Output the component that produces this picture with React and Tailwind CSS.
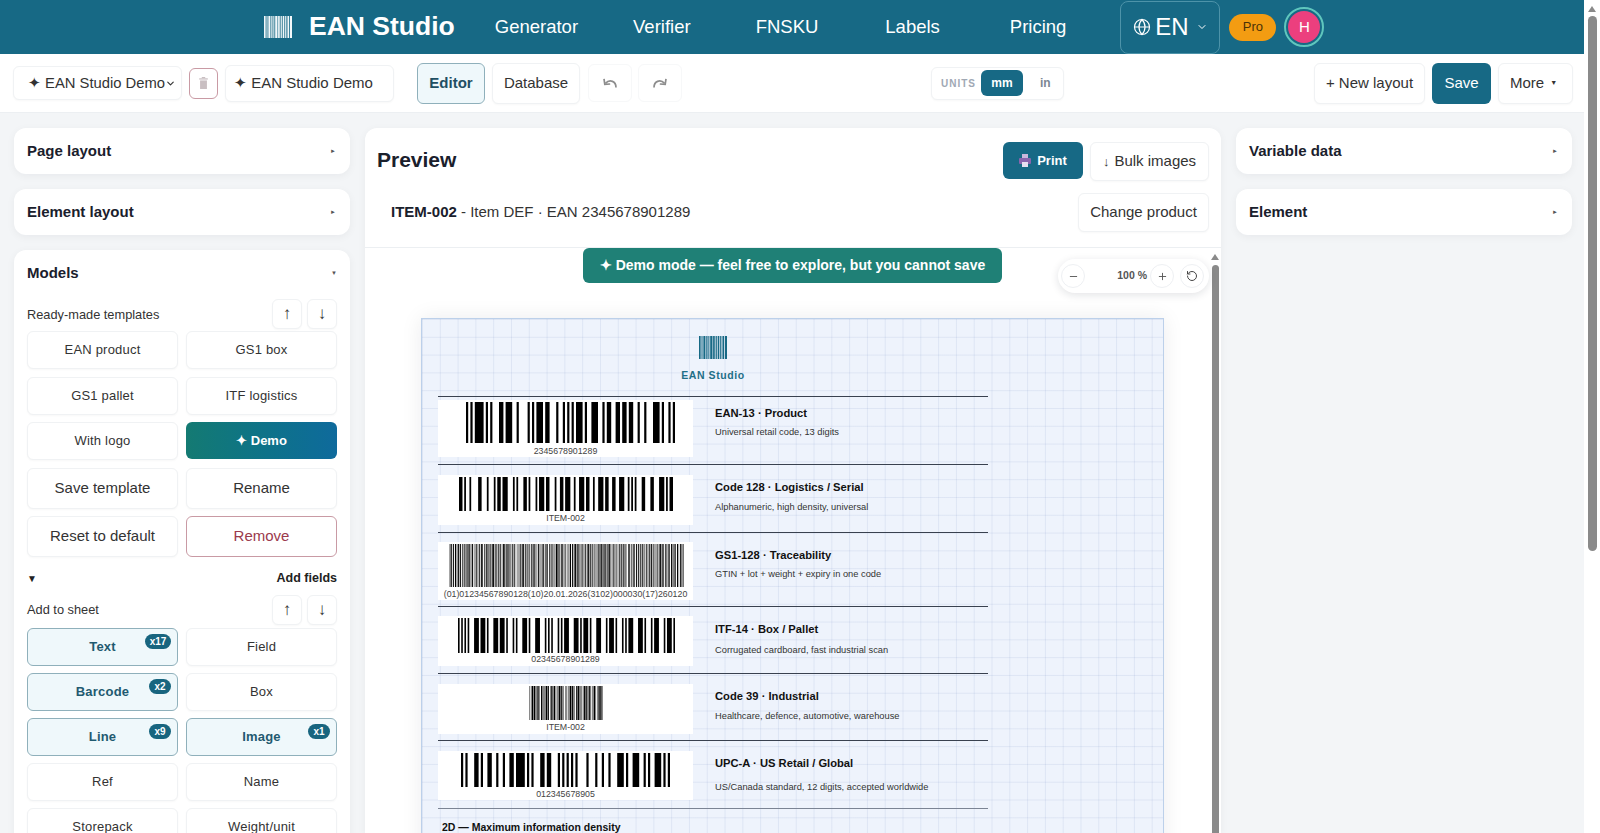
import { ChevronDown, Globe, Minus, Plus, RotateCcw } from "lucide-react";

const EAN_L = ["0001101", "0011001", "0010011", "0111101", "0100011", "0110001", "0101111", "0111011", "0110111", "0001011"];
const EAN_PARITY = ["LLLLLL", "LLGLGG", "LLGGLG", "LLGGGL", "LGLLGG", "LGGLLG", "LGGGLL", "LGLGLG", "LGLGGL", "LGGLGL"];
const flip = (s) => s.split("").map((c) => (c === "0" ? "1" : "0")).join("");
const eanR = (d) => flip(EAN_L[d]);
const eanG = (d) => eanR(d).split("").reverse().join("");

function ean13(code) {
  const digits = code.split("").map(Number);
  const parity = EAN_PARITY[digits[0]];
  let bits = "101";
  digits.slice(1, 7).forEach((d, i) => {
    bits += parity[i] === "L" ? EAN_L[d] : eanG(d);
  });
  bits += "01010";
  digits.slice(7).forEach((d) => {
    bits += eanR(d);
  });
  return bits + "101";
}

function widthsToBits(widths) {
  let bits = "";
  widths.split("").forEach((w, i) => {
    bits += (i % 2 === 0 ? "1" : "0").repeat(Number(w));
  });
  return bits;
}

function code128() {
  // start B, ITEM-002, check, stop
  return widthsToBits("211214" + "231311" + "213311" + "132113" + "113123" + "122132" + "123122" + "123122" + "223211" + "111323" + "2331112");
}

function itf14(code) {
  const nw = ["nnwwn", "wnnnw", "nwnnw", "wwnnn", "nnwnw", "wnwnn", "nwwnn", "nnnww", "wnnwn", "nwnwn"];
  let widths = "1111";
  for (let i = 0; i < code.length; i += 2) {
    const a = nw[Number(code[i])];
    const b = nw[Number(code[i + 1])];
    for (let j = 0; j < 5; j++) {
      widths += a[j] === "w" ? "3" : "1";
      widths += b[j] === "w" ? "3" : "1";
    }
  }
  return widthsToBits(widths + "311");
}

function code39(text) {
  const table = { "0": "000110100", "2": "001100001", I: "001001100", T: "000010110", E: "100011000", M: "101000010", "-": "010000101", "*": "010010100" };
  let widths = "";
  text.split("").forEach((c) => {
    widths += table[c].split("").map((b) => (b === "1" ? "3" : "1")).join("") + "1";
  });
  return widthsToBits(widths);
}

function denseBits() {
  let seed = 17;
  let widths = "";
  for (let i = 0; i < 330; i++) {
    seed = (seed * 137 + 29) % 1009;
    widths += String((seed % 3) + 1);
  }
  return widthsToBits("1" + widths);
}

function Bars({ bits, className }) {
  const rects = [];
  let start = -1;
  for (let i = 0; i <= bits.length; i++) {
    if (bits[i] === "1" && start < 0) start = i;
    if (bits[i] !== "1" && start >= 0) {
      rects.push(<rect key={i} x={start} y="0" width={i - start} height="10" />);
      start = -1;
    }
  }
  return (
    <svg viewBox={`0 0 ${bits.length} 10`} preserveAspectRatio="none" className={className} fill="#000">
      {rects}
    </svg>
  );
}

function LogoBars({ className }) {
  const xs = [0, 2.4, 4.2, 7, 9, 10.8, 13.6, 16, 18, 20.4, 22.6, 25];
  const ws = [1.6, 1, 2, 1.2, 1, 2.2, 1.6, 1.2, 1.6, 1.2, 1.6, 2];
  return (
    <svg viewBox="0 0 27 22" preserveAspectRatio="none" className={className} fill="currentColor">
      {xs.map((x, i) => (
        <rect key={x} x={x} y="0" width={ws[i]} height="22" />
      ))}
    </svg>
  );
}

function CurvedArrow({ className }) {
  return (
    <svg viewBox="0 0 16 12" className={className} fill="none" stroke="currentColor" strokeWidth="1.7">
      <path d="M14 10.5C14 4.5 8 1.5 3.4 6.4" />
      <path d="M2 1.8L2.8 7.4L8.2 7" />
    </svg>
  );
}

const navItems = [
  { label: "Generator", className: "ml-[40px]" },
  { label: "Verifier", className: "ml-[55px]" },
  { label: "FNSKU", className: "ml-[65px]" },
  { label: "Labels", className: "ml-[67px]" },
  { label: "Pricing", className: "ml-[70px]" },
];

const rows = [
  {
    height: "h-[68px]",
    box: "mt-[3px] h-[57px]",
    barsWrap: "ml-[28px] mt-[2px]",
    bars: "h-[41px] w-[209px]",
    capGap: "mt-[3px]",
    bits: ean13("2345678901289"),
    caption: "2345678901289",
    title: "EAN-13 · Product",
    desc: "Universal retail code, 13 digits",
    text: "pt-[10px]",
    descGap: "mt-[7px]",
  },
  {
    height: "h-[68px]",
    box: "mt-[10px] h-[50px]",
    barsWrap: "ml-[21px] mt-[2px]",
    bars: "h-[34px] w-[214px]",
    capGap: "mt-[2px]",
    bits: code128(),
    caption: "ITEM-002",
    title: "Code 128 · Logistics / Serial",
    desc: "Alphanumeric, high density, universal",
    text: "pt-[16px]",
    descGap: "mt-[8px]",
  },
  {
    height: "h-[74px]",
    box: "mt-[9px] h-[58px]",
    barsWrap: "ml-[11px] mt-[2px]",
    bars: "h-[43px] w-[235px]",
    capGap: "mt-[2px]",
    bits: denseBits(),
    caption: "(01)01234567890128(10)20.01.2026(3102)000030(17)260120",
    title: "GS1-128 · Traceability",
    desc: "GTIN + lot + weight + expiry in one code",
    text: "pt-[16px]",
    descGap: "mt-[7px]",
  },
  {
    height: "h-[67px]",
    box: "mt-[9px] h-[50px]",
    barsWrap: "ml-[20px] mt-[2px]",
    bars: "h-[35px] w-[217px]",
    capGap: "mt-[1px]",
    bits: itf14("02345678901289"),
    caption: "02345678901289",
    title: "ITF-14 · Box / Pallet",
    desc: "Corrugated cardboard, fast industrial scan",
    text: "pt-[16px]",
    descGap: "mt-[9px]",
  },
  {
    height: "h-[67px]",
    box: "mt-[10px] h-[50px]",
    barsWrap: "ml-[91px] mt-[2px]",
    bars: "h-[34px] w-[74px]",
    capGap: "mt-[2px]",
    bits: code39("*ITEM-002*"),
    caption: "ITEM-002",
    title: "Code 39 · Industrial",
    desc: "Healthcare, defence, automotive, warehouse",
    text: "pt-[16px]",
    descGap: "mt-[8px]",
  },
  {
    height: "h-[68px]",
    box: "mt-[10px] h-[49px]",
    barsWrap: "ml-[23px] mt-[2px]",
    bars: "h-[34px] w-[209px]",
    capGap: "mt-[2px]",
    bits: ean13("0012345678905"),
    caption: "012345678905",
    title: "UPC-A · US Retail / Global",
    desc: "US/Canada standard, 12 digits, accepted worldwide",
    text: "pt-[16px]",
    descGap: "mt-[12px]",
  },
];

const btn = "flex items-center justify-center rounded-md border border-[#f0f2f4] bg-white shadow-[0_1px_2px_rgba(15,23,42,0.03)]";

function Collapsed({ title, arrow = "►" }) {
  return (
    <div className="flex h-[46px] shrink-0 items-center justify-between rounded-xl bg-white pl-[13px] pr-[14px] shadow-[0_2px_8px_rgba(15,23,42,0.05)]">
      <span className="text-[15px] font-bold text-[#1a202c]">{title}</span>
      <span className="text-[6px] text-[#555]">{arrow}</span>
    </div>
  );
}

function ArrowPair() {
  return (
    <div className="flex gap-[5px]">
      <div className={`${btn} h-[30px] w-[30px] text-[17px] text-[#333]`}>↑</div>
      <div className={`${btn} h-[30px] w-[30px] text-[17px] text-[#333]`}>↓</div>
    </div>
  );
}

function GridButton({ label, tall }) {
  return (
    <div className={`${btn} ${tall ? "h-[41px] text-[15px]" : "h-[38px] text-[13px] tracking-[0.2px]"} text-[#333]`}>
      {label}
    </div>
  );
}

function ActiveField({ label, count, badge }) {
  return (
    <div className="relative flex h-[38px] items-center justify-center rounded-md border border-[#8fb0bb] bg-[#eff8fb] text-[13px] font-bold tracking-[0.2px] text-[#1f5a70]">
      {label}
      <span className={`absolute top-[5px] flex h-[15px] items-center justify-center rounded-full bg-[#18657f] text-[10px] font-bold tracking-normal text-white ${badge}`}>
        {count}
      </span>
    </div>
  );
}

export default function App() {
  return (
    <div className="flex h-[833px] w-[1600px] overflow-hidden bg-[#f3f5f7] font-['Liberation_Sans',Arial,sans-serif] text-[#222]">
      <div className="flex w-[1584px] flex-col">
        <header className="flex h-[54px] shrink-0 items-center bg-[#176985] pl-[264px] text-white">
          <LogoBars className="h-[22px] w-[28px] text-[#f2f8fa]" />
          <span className="ml-[17px] text-[26.5px] font-bold">EAN Studio</span>
          {navItems.map((item) => (
            <span key={item.label} className={`text-[18.5px] ${item.className}`}>
              {item.label}
            </span>
          ))}
          <div className="ml-[54px] flex h-[53px] w-[100px] items-center justify-center gap-[4px] rounded-lg border border-[#4d93a9] bg-[#176985]">
            <Globe size={18} strokeWidth={1.6} />
            <span className="text-[24px]">EN</span>
            <ChevronDown size={12} className="ml-[3px]" />
          </div>
          <span className="ml-[9px] flex h-[27px] w-[47px] items-center justify-center rounded-full bg-[#f39c12] text-[13px] text-[#4a3208]">Pro</span>
          <div className="ml-[8px] flex h-[40px] w-[40px] items-center justify-center rounded-full border-2 border-[#5fc6bd] p-[2px]">
            <span className="flex h-full w-full items-center justify-center rounded-full bg-[#ec3f7e] text-[15px]">H</span>
          </div>
        </header>

        <div className="flex h-[59px] shrink-0 items-center border-b border-[#eceff2] bg-white pl-[13px] pr-[11px]">
          <div className={`${btn} h-[34px] w-[169px] justify-between pl-[11px] pr-[2px] text-[14.8px] text-[#333]`}>
            ✦ EAN Studio Demo
            <ChevronDown size={11} strokeWidth={2.5} />
          </div>
          <div className="ml-[7px] flex h-[31px] w-[29px] items-center justify-center rounded-md border border-[#c99aa4] bg-white">
            <svg viewBox="0 0 10 14" className="h-[12px] w-[9px]" fill="#c9bfc2">
              <rect x="0" y="1.5" width="10" height="1.5" />
              <rect x="3" y="0" width="4" height="1.5" />
              <path d="M1 4h8v10H1z" />
            </svg>
          </div>
          <div className={`${btn} ml-[7px] h-[37px] w-[169px] justify-start pl-[8px] text-[15px] text-[#333]`}>✦ EAN Studio Demo</div>
          <div className="ml-[23px] flex h-[41px] w-[68px] items-center justify-center rounded-md border border-[#8fb0bb] bg-[#eff8fb] text-[15px] font-bold text-[#1f4f63]">Editor</div>
          <div className={`${btn} ml-[7px] h-[41px] w-[88px] text-[15px] text-[#333]`}>Database</div>
          <div className="ml-[8px] flex h-[38px] w-[44px] items-center justify-center rounded-md border border-[#f7f8f9] text-[#8d8d8d]">
            <CurvedArrow className="h-[12px] w-[16px]" />
          </div>
          <div className="ml-[6px] flex h-[38px] w-[44px] items-center justify-center rounded-md border border-[#f7f8f9] text-[#8d8d8d]">
            <CurvedArrow className="h-[12px] w-[16px] -scale-x-100" />
          </div>
          <div className={`${btn} ml-[249px] h-[33px] w-[133px] justify-start pl-[9px] pr-[2px]`}>
            <span className="text-[10px] font-bold tracking-[1px] text-[#a0a8b4]">UNITS</span>
            <span className="ml-[5px] flex h-[26px] w-[42px] items-center justify-center rounded-md bg-[#176985] text-[12px] font-bold text-white">mm</span>
            <span className="ml-[17px] text-[12px] font-bold text-[#7b8794]">in</span>
          </div>
          <div className={`${btn} ml-auto h-[41px] w-[111px] text-[15px] text-[#333]`}>+ New layout</div>
          <div className="ml-[7px] flex h-[41px] w-[59px] items-center justify-center rounded-md bg-[#176985] text-[15px] text-white">Save</div>
          <div className={`${btn} ml-[7px] h-[41px] w-[75px] gap-[6px] pr-[4px] text-[15px] text-[#333]`}>
            More <span className="text-[7px]">▼</span>
          </div>
        </div>

        <div className="flex min-h-0 flex-1 gap-[15px] pl-[14px] pr-[12px] pt-[15px]">
          <aside className="flex w-[336px] shrink-0 flex-col gap-[15px]">
            <Collapsed title="Page layout" />
            <Collapsed title="Element layout" />
            <div className="shrink-0 rounded-xl bg-white px-[13px] pb-4 shadow-[0_2px_8px_rgba(15,23,42,0.05)]">
              <div className="flex h-[46px] items-center justify-between">
                <span className="text-[15px] font-bold text-[#1a202c]">Models</span>
                <span className="text-[6px] text-[#555]">▼</span>
              </div>
              <div className="mt-[3px] flex items-center justify-between">
                <span className="pt-[1px] text-[12.8px] text-[#333]">Ready-made templates</span>
                <ArrowPair />
              </div>
              <div className="mt-[2px] grid grid-cols-2 gap-x-2 gap-y-[7.5px]">
                <GridButton label="EAN product" />
                <GridButton label="GS1 box" />
                <GridButton label="GS1 pallet" />
                <GridButton label="ITF logistics" />
                <GridButton label="With logo" />
                <div className="flex h-[37px] items-center justify-center rounded-md bg-gradient-to-r from-[#147a72] to-[#0f6a9c] text-[13px] font-bold text-white">✦ Demo</div>
                <GridButton label="Save template" tall />
                <GridButton label="Rename" tall />
                <GridButton label="Reset to default" tall />
                <div className="flex h-[41px] items-center justify-center rounded-md border border-[#c99aa4] bg-white text-[15px] text-[#9b3a4d]">Remove</div>
              </div>
              <div className="mt-[12px] flex items-center justify-between text-[12.5px] font-bold text-[#222]">
                <span className="text-[10px]">▼</span>
                <span>Add fields</span>
              </div>
              <div className="mt-[7px] flex items-center justify-between">
                <span className="text-[12.8px] text-[#333]">Add to sheet</span>
                <ArrowPair />
              </div>
              <div className="mt-[3px] grid grid-cols-2 gap-x-2 gap-y-[7px]">
                <ActiveField label="Text" count="x17" badge="right-[6px] w-[26px]" />
                <GridButton label="Field" />
                <ActiveField label="Barcode" count="x2" badge="right-[6px] w-[22px]" />
                <GridButton label="Box" />
                <ActiveField label="Line" count="x9" badge="right-[6px] w-[22px]" />
                <ActiveField label="Image" count="x1" badge="right-[6px] w-[22px]" />
                <GridButton label="Ref" />
                <GridButton label="Name" />
                <GridButton label="Storepack" />
                <GridButton label="Weight/unit" />
              </div>
            </div>
          </aside>

          <main className="flex min-w-0 flex-1 flex-col rounded-t-xl bg-white shadow-[0_2px_8px_rgba(15,23,42,0.05)]">
            <div className="flex h-[53px] shrink-0 items-end justify-between px-[12px]">
              <h2 className="pb-[6px] text-[21px] font-bold text-[#1a202c]">Preview</h2>
              <div className="flex gap-[7px]">
                <div className="flex h-[37px] w-[80px] items-center justify-center gap-[6px] rounded-md bg-[#176985] text-[13px] font-bold text-white">
                  <svg viewBox="0 0 12 13" className="h-[13px] w-[12px]">
                    <rect x="3" y="0" width="6" height="4" fill="#c9b6dc" />
                    <rect x="0" y="4" width="12" height="6" rx="1" fill="#8a64ad" />
                    <rect x="3" y="8" width="6" height="5" fill="#e6dff0" />
                  </svg>
                  Print
                </div>
                <div className={`${btn} h-[39px] w-[119px] text-[15px] text-[#333]`}>
                  <span className="mr-[5px] text-[13px] font-bold">↓</span> Bulk images
                </div>
              </div>
            </div>
            <div className="flex h-[67px] shrink-0 items-center justify-between border-b border-[#eceff2] pb-[3px] pl-[26px] pr-[12px]">
              <p className="text-[15px] text-[#333]">
                <b className="text-[#1a202c]">ITEM-002</b> - Item DEF · EAN 2345678901289
              </p>
              <div className={`${btn} h-[39px] w-[131px] text-[15px] text-[#333]`}>Change product</div>
            </div>

            <div className="relative flex min-h-0 flex-1">
              <div className="min-w-0 flex-1 overflow-hidden">
                <div className="ml-[218px] flex h-[35px] w-[419px] items-center justify-center rounded-md bg-[#1f8076] text-[14px] font-bold text-white">✦ Demo mode — feel free to explore, but you cannot save</div>
                <div className="ml-[56px] mt-[35px] h-[600px] w-[743px] border border-[#bcd0ea] bg-[#eef3fc] bg-[linear-gradient(rgba(110,135,190,0.13)_1px,transparent_1px),linear-gradient(90deg,rgba(110,135,190,0.13)_1px,transparent_1px)] bg-[size:17.8px_17.8px] pl-[16px] shadow-[0_0_20px_rgba(15,23,42,0.08)]">
                  <div className="flex h-[77px] w-[550px] flex-col items-center pt-[17px]">
                    <LogoBars className="h-[23px] w-[28px] text-[#176985]" />
                    <span className="mt-[9px] text-[10.5px] font-bold tracking-[0.6px] text-[#1f6f88]">EAN Studio</span>
                  </div>
                  {rows.map((row) => (
                    <div key={row.title} className={`flex w-[550px] border-t-[1.5px] border-[#39414f] ${row.height}`}>
                      <div className={`w-[255px] shrink-0 overflow-hidden bg-white ${row.box}`}>
                        <Bars bits={row.bits} className={`${row.barsWrap} ${row.bars}`} />
                        <p className={`whitespace-nowrap text-center text-[8.8px] leading-[10px] text-[#444] ${row.capGap}`}>{row.caption}</p>
                      </div>
                      <div className={`ml-[22px] ${row.text}`}>
                        <p className="text-[11.2px] font-bold leading-[13px] text-[#111]">{row.title}</p>
                        <p className={`text-[9.3px] leading-[11px] text-[#333] ${row.descGap}`}>{row.desc}</p>
                      </div>
                    </div>
                  ))}
                  <div className="w-[550px] border-t-[1.5px] border-[#7b8494] pl-[4px] pt-[11px] text-[10.5px] font-bold text-[#111]">2D — Maximum information density</div>
                </div>
              </div>
              <div className="w-[12px] shrink-0 bg-white pt-[6px]">
                <div className="mx-auto h-0 w-0 border-x-[4px] border-b-[6px] border-x-transparent border-b-[#8a8a8a]" />
                <div className="mx-auto mt-[5px] h-[600px] w-[7px] rounded-full bg-[#8a8a8a]" />
              </div>
              <div className="absolute right-[12px] top-[11px] flex h-[34px] w-[151px] items-center rounded-full bg-white pl-[3px] pr-[5px] shadow-[0_2px_8px_rgba(15,23,42,0.12)]">
                <span className="flex h-[24px] w-[24px] items-center justify-center rounded-full border border-[#eef0f3] text-[#555]">
                  <Minus size={11} />
                </span>
                <span className="ml-auto text-[10.5px] font-bold text-[#555]">100 %</span>
                <span className="ml-[3px] flex h-[24px] w-[24px] items-center justify-center rounded-full border border-[#eef0f3] text-[#555]">
                  <Plus size={11} />
                </span>
                <span className="ml-[6px] flex h-[24px] w-[24px] items-center justify-center rounded-full border border-[#eef0f3] text-[#444]">
                  <RotateCcw size={12} />
                </span>
              </div>
            </div>
          </main>

          <aside className="flex w-[336px] shrink-0 flex-col gap-[15px]">
            <Collapsed title="Variable data" />
            <Collapsed title="Element" />
          </aside>
        </div>
      </div>

      <div className="w-[16px] shrink-0 bg-white pt-[6px]">
        <div className="mx-auto h-0 w-0 border-x-[4px] border-b-[6px] border-x-transparent border-b-[#8a8a8a]" />
        <div className="mx-auto mt-[4px] h-[535px] w-[9px] rounded-full bg-[#8a8a8a]" />
      </div>
    </div>
  );
}
